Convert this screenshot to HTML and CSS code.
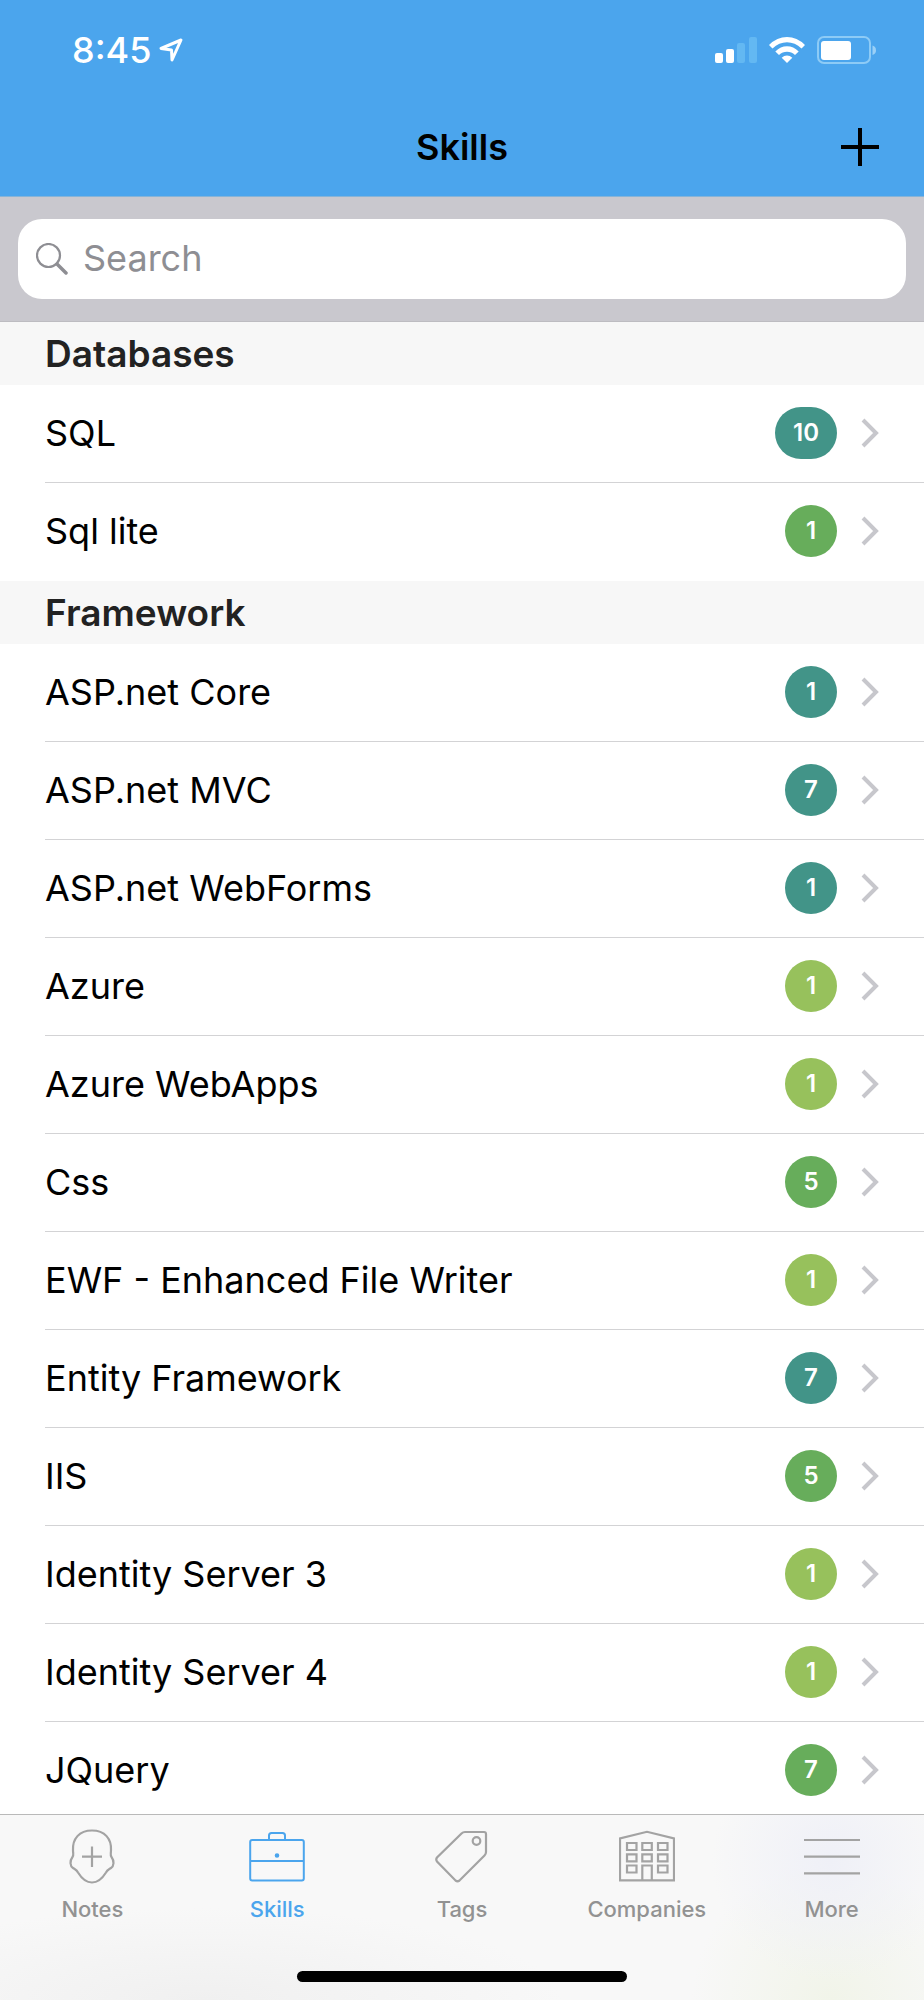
FILE: index.html
```html
<!DOCTYPE html>
<html lang="en">
<head>
<meta charset="utf-8">
<meta name="viewport" content="width=device-width, initial-scale=1">
<title>Skills</title>
<link rel="stylesheet" href="styles.css">
</head>
<body>
<svg class="defs" width="0" height="0" aria-hidden="true">
  <symbol id="chevron" viewBox="0 0 18 30"><path d="M2 2 L15 15 L2 28" fill="none" stroke="currentColor" stroke-width="4"/></symbol>
</svg>
<div class="app">
  <header class="header">
    <div class="status">
      <div class="status-left">
        <span class="time">8:45</span>
        <svg class="location" viewBox="0 0 24 24" width="24" height="24" aria-hidden="true"><path d="M22 2 L2 10.500 L12.500 12 L13 22 Z" fill="none" stroke="currentColor" stroke-width="3" stroke-linejoin="round"/></svg>
      </div>
      <div class="status-right">
        <svg viewBox="0 0 42 28" width="42" height="28" aria-hidden="true">
          <rect x="0" y="17" width="8" height="10" rx="2" fill="#fff"/>
          <rect x="11" y="13" width="8" height="14" rx="2" fill="#fff"/>
          <rect x="22" y="7" width="8" height="20" rx="2" fill="#63b8f2"/>
          <rect x="34" y="1" width="8" height="26" rx="2" fill="#63b8f2"/>
        </svg>
        <svg viewBox="0 0 36 28" width="36" height="28" aria-hidden="true">
          <g fill="#fff">
            <path d="M0 9 Q8 1 18 1 T36 9 L32.500 12.500 Q26 6.300 18 6.300 T3.500 12.500 Z"/>
            <path d="M6.300 15.500 Q11.500 10.300 18 10.300 T29.700 15.500 L26 19 Q22.500 15.700 18 15.700 T10 19 Z"/>
            <path d="M12.700 21.800 Q15 19.600 18 19.600 T23.300 21.800 L18 27 Z"/>
          </g>
        </svg>
        <svg viewBox="0 0 60 28" width="60" height="28" aria-hidden="true">
          <rect x="1" y="1" width="52" height="26" rx="6" fill="none" stroke="#8dcbf6" stroke-width="2"/>
          <rect x="4" y="5" width="30" height="19" rx="3" fill="#fff"/>
          <path d="M55.500 9.500 Q59 10.500 59 14.300 Q59 18 55.500 19 Z" fill="#9ad0f7"/>
        </svg>
      </div>
    </div>
    <div class="navbar">
      <h1 class="title">Skills</h1>
      <button class="add" type="button" aria-label="Add skill">
        <svg viewBox="0 0 38 38" width="38" height="38" aria-hidden="true"><path d="M19 0 V38 M0 19 H38" stroke="#000" stroke-width="4"/></svg>
      </button>
    </div>
  </header>
  <form class="search" role="search">
    <label class="search-box">
      <svg viewBox="0 0 32 32" width="32" height="32" aria-hidden="true"><circle cx="12.500" cy="12.500" r="11.500" fill="none" stroke="#8e8e93" stroke-width="2.200"/><path d="M21 21 L30 30" stroke="#8e8e93" stroke-width="3.500" stroke-linecap="round"/></svg>
      <input class="search-input" type="search" placeholder="Search" aria-label="Search">
    </label>
  </form>
  <main class="list">
    <section>
      <h2 class="group">Databases</h2>
      <ul class="rows">
        <li><a class="row" href="#"><span class="name">SQL</span><span class="badge teal">10</span><svg class="chevron"><use href="#chevron"/></svg></a></li>
        <li><a class="row" href="#"><span class="name">Sql lite</span><span class="badge green">1</span><svg class="chevron"><use href="#chevron"/></svg></a></li>
      </ul>
    </section>
    <section>
      <h2 class="group">Framework</h2>
      <ul class="rows">
        <li><a class="row" href="#"><span class="name">ASP.net Core</span><span class="badge teal">1</span><svg class="chevron"><use href="#chevron"/></svg></a></li>
        <li><a class="row" href="#"><span class="name">ASP.net MVC</span><span class="badge teal">7</span><svg class="chevron"><use href="#chevron"/></svg></a></li>
        <li><a class="row" href="#"><span class="name">ASP.net WebForms</span><span class="badge teal">1</span><svg class="chevron"><use href="#chevron"/></svg></a></li>
        <li><a class="row" href="#"><span class="name">Azure</span><span class="badge lime">1</span><svg class="chevron"><use href="#chevron"/></svg></a></li>
        <li><a class="row" href="#"><span class="name">Azure WebApps</span><span class="badge lime">1</span><svg class="chevron"><use href="#chevron"/></svg></a></li>
        <li><a class="row" href="#"><span class="name">Css</span><span class="badge green">5</span><svg class="chevron"><use href="#chevron"/></svg></a></li>
        <li><a class="row" href="#"><span class="name">EWF - Enhanced File Writer</span><span class="badge lime">1</span><svg class="chevron"><use href="#chevron"/></svg></a></li>
        <li><a class="row" href="#"><span class="name">Entity Framework</span><span class="badge teal">7</span><svg class="chevron"><use href="#chevron"/></svg></a></li>
        <li><a class="row" href="#"><span class="name">IIS</span><span class="badge green">5</span><svg class="chevron"><use href="#chevron"/></svg></a></li>
        <li><a class="row" href="#"><span class="name">Identity Server 3</span><span class="badge lime">1</span><svg class="chevron"><use href="#chevron"/></svg></a></li>
        <li><a class="row" href="#"><span class="name">Identity Server 4</span><span class="badge lime">1</span><svg class="chevron"><use href="#chevron"/></svg></a></li>
        <li><a class="row" href="#"><span class="name">JQuery</span><span class="badge green">7</span><svg class="chevron"><use href="#chevron"/></svg></a></li>
      </ul>
    </section>
  </main>
  <footer class="footer">
    <nav class="tabs">
      <a class="tab" href="#">
        <svg class="tab-icon light" viewBox="0 0 56 56" aria-hidden="true"><path d="M28 1.500 C15 1.500 8.500 10 9 21 C9 25 10 26 8.500 28 C5.500 32 6 37 9 39 C12 41 12.500 40.500 14 43.500 C18 50 23 53.500 28 53.500 C33 53.500 38 50 42 43.500 C43.500 40.500 44 41 47 39 C50 37 50.500 32 47.500 28 C46 26 47 25 47 21 C47.500 10 41 1.500 28 1.500 Z M28 17.500 V38 M18 27.700 H38" /></svg>
        <span>Notes</span>
      </a>
      <a class="tab active" href="#" aria-current="page">
        <svg class="tab-icon" viewBox="0 0 56 56" aria-hidden="true"><rect x="1.200" y="11" width="53.600" height="40.500" rx="2"/><path d="M1 32 H55 M20 11 V6.500 Q20 4 22.500 4 H33.500 Q36 4 36 6.500 V11"/><circle cx="28" cy="26.500" r="1.300" fill="currentColor"/></svg>
        <span>Skills</span>
      </a>
      <a class="tab" href="#">
        <svg class="tab-icon light" viewBox="0 0 56 56" aria-hidden="true"><path d="M31 3 H50 Q52 3 52 5 V23 Q52 25 50.500 26.500 L25.500 51.500 Q23.500 53 21.500 51.500 L3 32.500 Q1.500 30.500 3 28.500 L27.500 4.500 Q29 3 31 3 Z"/><circle cx="42.500" cy="12" r="3.800"/></svg>
        <span>Tags</span>
      </a>
      <a class="tab" href="#">
        <svg class="tab-icon light" viewBox="0 0 56 56" aria-hidden="true"><path d="M1 51.300 V9.500 L28 2.800 L55 9.500 V51.300 Z M8 14 h9.500 v7 H8 Z M23.300 14 h9.500 v7 h-9.500 Z M39 14 h9.500 v7 H39 Z M8 25.300 h9.500 v7 H8 Z M23.300 25.300 h9.500 v7 h-9.500 Z M39 25.300 h9.500 v7 H39 Z M8 36.500 h9.500 v7 H8 Z M39 36.500 h9.500 v7 H39 Z M23.300 51 V36.500 h9.500 V51"/></svg>
        <span>Companies</span>
      </a>
      <a class="tab" href="#">
        <svg class="tab-icon light" viewBox="0 0 56 56" aria-hidden="true"><path d="M0 11 H56 M0 27.700 H56 M0 44.400 H56"/></svg>
        <span>More</span>
      </a>
    </nav>
    <div class="home-bar"></div>
  </footer>
</div>
</body>
</html>
```
FILE: styles.css
```css
* {
  box-sizing: border-box;
}

body {
  margin: 0;
  font-family: Inter, "Liberation Sans", sans-serif;
  color: #000;
  background: #fff;
}

.defs {
  position: absolute;
}

.app {
  display: flex;
  flex-direction: column;
  height: 100vh;
}

.header {
  background: #4ba5ed;
}

.status {
  display: flex;
  justify-content: space-between;
  align-items: center;
  padding: 27px 47px 26px 72px;
  color: #fff;
}

.status-left {
  display: flex;
  align-items: center;
  gap: 8px;
}

.time {
  font-size: 36px;
  line-height: 46px;
  font-weight: 500;
}

.status-right {
  display: flex;
  align-items: center;
  gap: 12px;
}

.navbar {
  display: grid;
  grid-template-columns: 1fr auto 1fr;
  align-items: center;
  padding: 0 45px 1px;
  border-bottom: 1px solid #86b4d8;
}

.title {
  grid-column: 2;
  margin: 0;
  font-size: 36px;
  line-height: 96px;
  font-weight: 600;
}

.add {
  justify-self: end;
  display: flex;
  padding: 0;
  border: 0;
  background: none;
}

.search {
  padding: 22px 18px;
  background: #c9c8ce;
  border-bottom: 1px solid #bdbcc1;
}

.search-box {
  display: flex;
  align-items: center;
  gap: 15px;
  padding: 0 18px;
  border-radius: 24px;
  background: #fff;
}

.search-input {
  flex: 1;
  min-width: 0;
  height: 80px;
  padding: 0 0 2px;
  border: 0;
  outline: 0;
  background: none;
  font: inherit;
  font-size: 36px;
  color: #000;
}

.search-input::placeholder {
  color: #8e8e93;
  opacity: 1;
}

.list {
  flex: 1;
  min-height: 0;
  overflow-y: auto;
  scrollbar-width: none;
}

.group {
  margin: 0;
  padding: 4px 45px 3px;
  background: #f7f7f7;
  color: #222;
  font-size: 37px;
  line-height: 56px;
  font-weight: 600;
}

.rows {
  margin: 0;
  padding: 0;
  list-style: none;
}

.row {
  display: flex;
  align-items: center;
  margin-left: 45px;
  padding: 22px 45px 23px 0;
  border-bottom: 1px solid #d3d3d5;
  color: #000;
  text-decoration: none;
}

.rows li:last-child .row {
  border-bottom-color: transparent;
}

.name {
  flex: 1;
  font-size: 36px;
  line-height: 52px;
}

.badge {
  min-width: 52px;
  padding: 0 18px;
  border-radius: 26px;
  color: #fff;
  font-size: 24px;
  line-height: 52px;
  font-weight: 600;
  text-align: center;
}

.teal {
  background: #429488;
}

.green {
  background: #67ad5b;
}

.lime {
  background: #97c15c;
}

.chevron {
  width: 18px;
  height: 30px;
  margin-left: 24px;
  color: #c7c7cc;
}

.footer {
  padding: 14px 0 18px;
  border-top: 1px solid #b9b9b9;
  background:
    radial-gradient(circle at 90% 25%, #eff0f7 0, transparent 120px),
    radial-gradient(circle at 90% 100%, #f1f4e9 0, transparent 140px),
    radial-gradient(ellipse at 22% 100%, #f0f0f0 0, transparent 360px),
    #f8f8f8;
}

.tabs {
  display: grid;
  grid-template-columns: repeat(5, 1fr);
}

.tab {
  display: flex;
  flex-direction: column;
  align-items: center;
  gap: 10px;
  color: #929292;
  font-size: 22px;
  line-height: 28px;
  font-weight: 500;
  text-decoration: none;
}

.active {
  color: #4ba5ed;
}

.tab-icon {
  width: 56px;
  height: 56px;
  fill: none;
  stroke: currentColor;
  stroke-width: 2;
}

.light {
  color: #a3a3a3;
  stroke-width: 2.2;
}

.home-bar {
  width: 36%;
  max-width: 330px;
  height: 11px;
  margin: 48px auto 0;
  border-radius: 6px;
  background: #000;
}
```
